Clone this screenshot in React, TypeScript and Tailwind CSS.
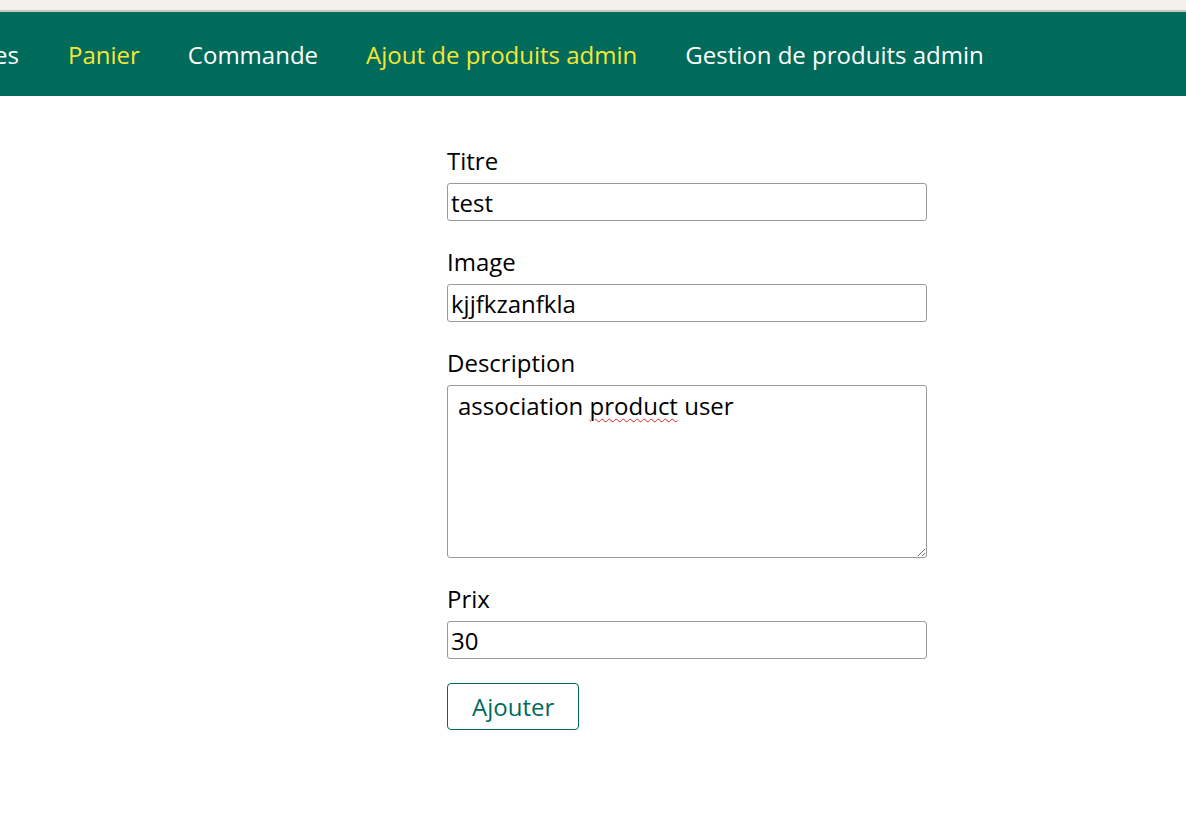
const NAV = [
  { label: "Panier", active: true },
  { label: "Commande", active: false },
  { label: "Ajout de produits admin", active: true },
  { label: "Gestion de produits admin", active: false },
];

export default function App() {
  return (
    <div className="min-h-screen bg-white overflow-hidden text-black" style={{ fontFamily: '"Open Sans", sans-serif' }}>
      {/* browser top strip */}
      <div className="h-[10px] bg-[#f3efea]" />
      <div className="h-[2px] bg-[#c9c6c1]" />

      <nav className="h-[84px] bg-[#006b5b] flex items-center gap-[48px] whitespace-nowrap">
        {/* first link is scrolled out of view */}
        <div className="w-[20px] overflow-hidden flex justify-end shrink-0">
          <a className="text-[24px] leading-[33px] text-white pr-[1px]">Articles</a>
        </div>
        {NAV.map(n => (
          <a key={n.label} className={`text-[24px] leading-[33px] ${n.active ? "text-[#f7e637]" : "text-white"}`}>{n.label}</a>
        ))}
      </nav>

      <form className="ml-[447px] w-[480px] pt-[48px] flex flex-col" onSubmit={e => e.preventDefault()}>
        <label className="block text-[24px] leading-[33px]">Titre</label>
        <input defaultValue="test" className="mt-[6px] h-[38px] w-full border border-[#9a9a9a] rounded-[3px] px-[3px] text-[24px] leading-[33px] outline-none" />

        <label className="block text-[24px] leading-[33px] mt-[24px]">Image</label>
        <input defaultValue="kjjfkzanfkla" className="mt-[6px] h-[38px] w-full border border-[#9a9a9a] rounded-[3px] px-[3px] text-[24px] leading-[33px] outline-none" />

        <label className="block text-[24px] leading-[33px] mt-[24px]">Description</label>
        <div className="relative mt-[6px]">
          <textarea defaultValue="association product user" spellCheck={false} className="block h-[173px] w-full border border-[#9a9a9a] rounded-[3px] px-[10px] py-[3px] text-[24px] leading-[33px] outline-none resize-y" />
          {/* spellcheck squiggle */}
          <span className="absolute left-[11px] top-[4px] text-[24px] leading-[33px] text-transparent pointer-events-none whitespace-pre">
            association <span className="underline decoration-wavy decoration-[#e02020] decoration-1 underline-offset-[3px]">product</span>
          </span>
        </div>

        <label className="block text-[24px] leading-[33px] mt-[24px]">Prix</label>
        <input defaultValue="30" className="mt-[6px] h-[38px] w-full border border-[#9a9a9a] rounded-[3px] px-[3px] text-[24px] leading-[33px] outline-none" />

        <div className="mt-[24px]">
          <button type="submit" className="h-[47px] px-[24px] border border-[#006b5b] rounded-[4px] text-[#006b5b] text-[24px] leading-[33px] bg-white">Ajouter</button>
        </div>
      </form>
    </div>
  );
}
